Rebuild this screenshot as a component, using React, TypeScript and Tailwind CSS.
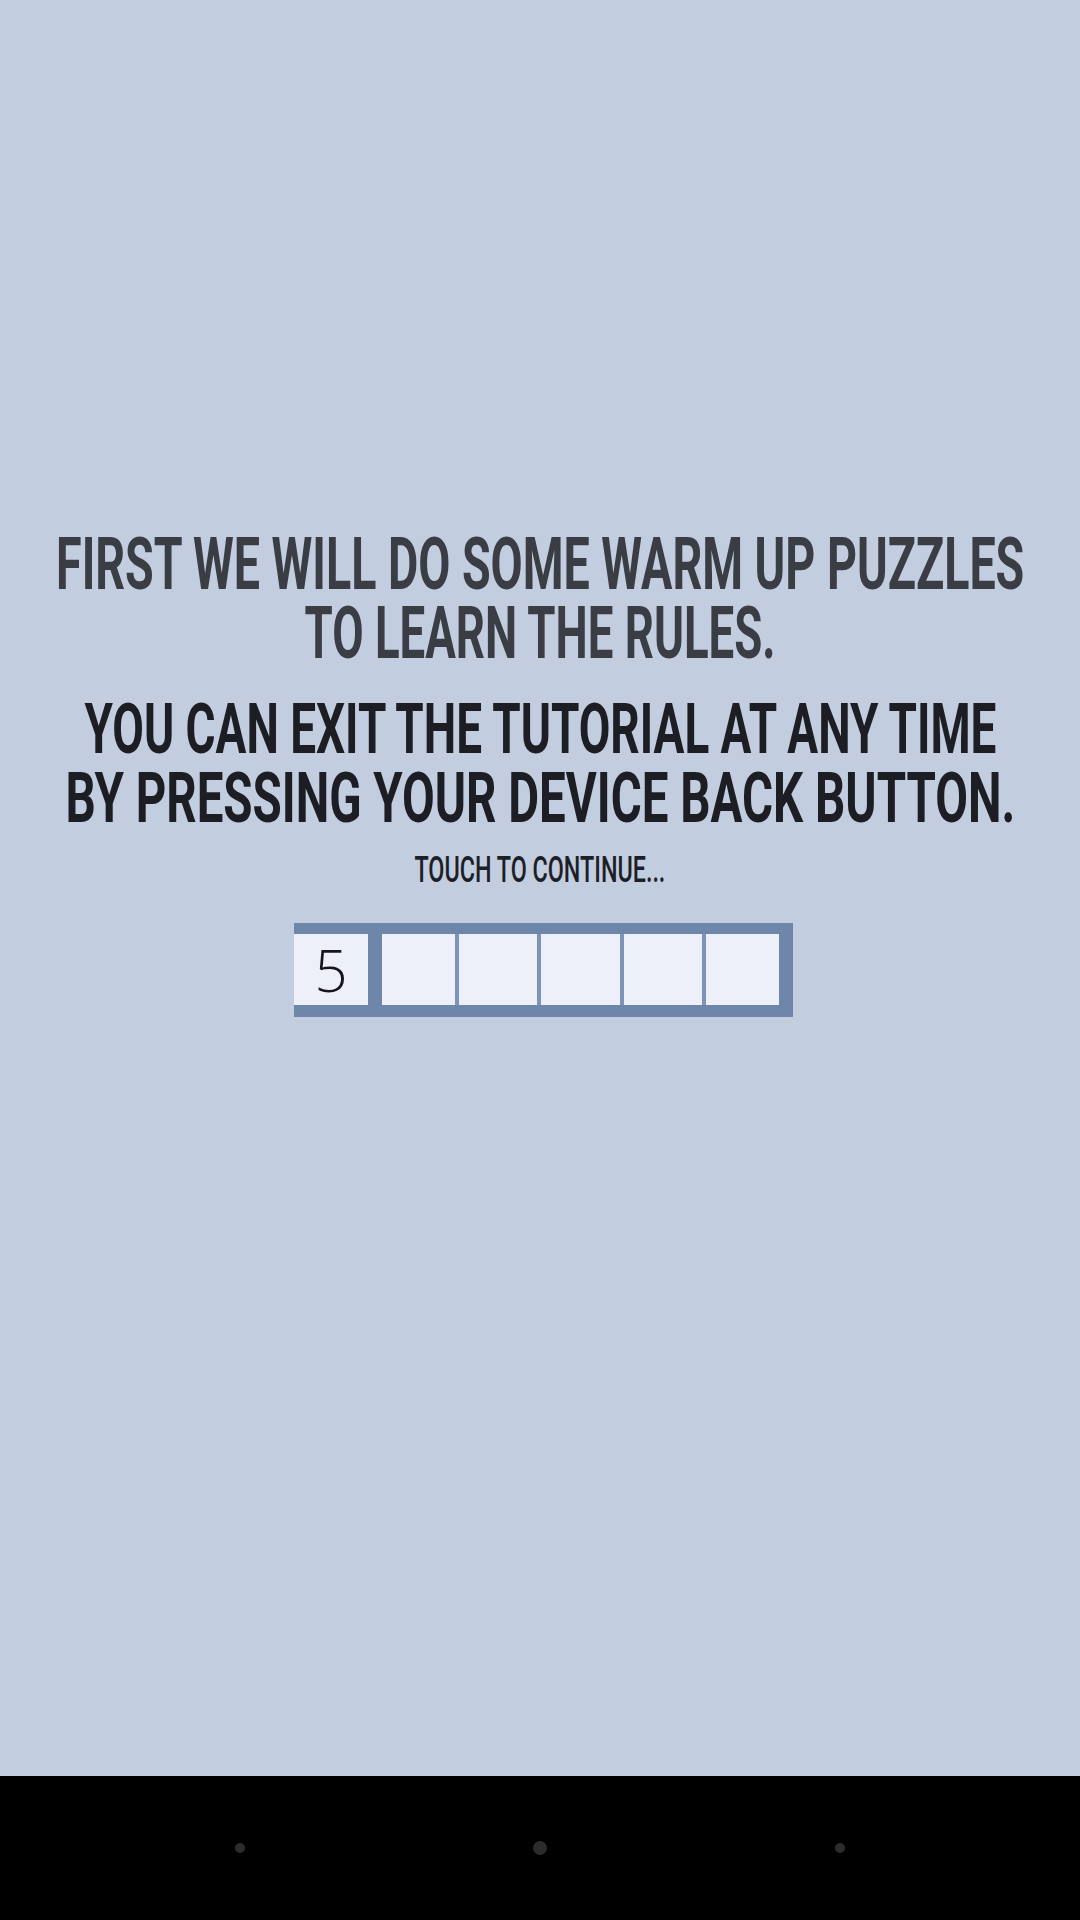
import { useLayoutEffect, useRef, useState } from "react";

// A single line of condensed display type: the line is squeezed horizontally
// so that it spans the requested width.
function FitLine({
  text,
  width,
  className,
}: {
  text: string;
  width: number;
  className: string;
}) {
  const ref = useRef<HTMLSpanElement>(null);
  const [scale, setScale] = useState(1);

  useLayoutEffect(() => {
    const measure = () => {
      const el = ref.current;
      if (!el) return;
      const w = el.offsetWidth;
      if (w) setScale(width / w);
    };
    measure();
    if (document.fonts) document.fonts.ready.then(measure);
  }, [width, text]);

  return (
    <div className="flex justify-center">
      <span
        ref={ref}
        className={"inline-block shrink-0 whitespace-nowrap origin-center " + className}
        style={{ transform: `scaleX(${scale})` }}
      >
        {text}
      </span>
    </div>
  );
}

function Cell({ w, children }: { w: string; children?: React.ReactNode }) {
  return (
    <div className={"flex h-[71px] items-center justify-center bg-[#edf0f8] " + w}>
      {children}
    </div>
  );
}

function Divider() {
  return <div className="h-[71px] w-[4px] bg-[#7d93b8]" />;
}

export default function App() {
  const display = "font-['Roboto',sans-serif] font-bold uppercase";
  return (
    <div className="flex h-[1920px] w-[1080px] flex-col overflow-hidden">
      <main className="flex h-[1776px] w-full flex-col overflow-hidden bg-[#c3cde0] pt-[530px]">
        <div className="text-[#3a3d44]">
          <FitLine
            text="FIRST WE WILL DO SOME WARM UP PUZZLES"
            width={968}
            className={display + " text-[72px] leading-[69px]"}
          />
          <FitLine
            text="TO LEARN THE RULES."
            width={471}
            className={display + " text-[72px] leading-[69px]"}
          />
        </div>
        <div className="mt-[26px] text-[#1c1e23]">
          <FitLine
            text="YOU CAN EXIT THE TUTORIAL AT ANY TIME"
            width={912}
            className={display + " text-[71px] leading-[69px]"}
          />
          <FitLine
            text="BY PRESSING YOUR DEVICE BACK BUTTON."
            width={950}
            className={display + " text-[71px] leading-[69px]"}
          />
        </div>
        <div className="mt-[18px] text-[#1d1f26]">
          <FitLine
            text="TOUCH TO CONTINUE..."
            width={251}
            className={"font-['Roboto',sans-serif] font-medium text-[37px] leading-[40px]"}
          />
        </div>

        {/* puzzle strip: a given number, then five empty squares */}
        <div className="mt-[33px] flex pl-[294px]">
          <div className="flex bg-[#6f86ab] pb-[12px] pr-[14px] pt-[11px]">
            <Cell w="w-[74px]">
              <span className="font-['Open_Sans',sans-serif] text-[58px] font-light leading-none text-[#15161c]">
                5
              </span>
            </Cell>
            <div className="w-[14px]" />
            <Cell w="w-[73px]" />
            <Divider />
            <Cell w="w-[78px]" />
            <Divider />
            <Cell w="w-[79px]" />
            <Divider />
            <Cell w="w-[78px]" />
            <Divider />
            <Cell w="w-[73px]" />
          </div>
        </div>
      </main>

      {/* system navigation bar */}
      <nav className="flex h-[144px] w-full items-center justify-center gap-[288px] bg-black">
        <span className="h-[10px] w-[10px] rounded-full bg-[#2c2c2c]" />
        <span className="h-[14px] w-[14px] rounded-full bg-[#2c2c2c]" />
        <span className="h-[10px] w-[10px] rounded-full bg-[#2c2c2c]" />
      </nav>
    </div>
  );
}
